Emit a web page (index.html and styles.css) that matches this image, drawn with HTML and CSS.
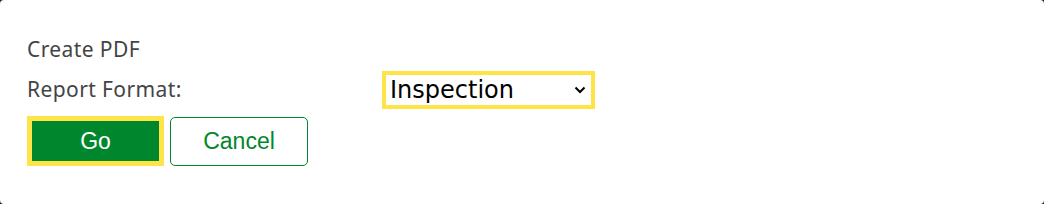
FILE: index.html
```html
<!DOCTYPE html>
<html lang="en">
<head>
    <meta charset="UTF-8">
    <title>Create PDF</title>
    <link rel="stylesheet" href="styles.css">
</head>
<body>
    <div class="dialog">
        <div class="title">Create PDF</div>
        <div class="form-row">
            <label class="label">Report Format:</label>
            <div class="select-box">
                <span class="select-value">Inspection</span>
                <svg class="chevron" width="12" height="8" viewBox="0 0 12 8">
                    <path d="M1.5 1.5 L6 6 L10.5 1.5" fill="none" stroke="#000" stroke-width="2"/>
                </svg>
            </div>
        </div>
        <div class="buttons">
            <button class="btn btn-go">Go</button>
            <button class="btn btn-cancel">Cancel</button>
        </div>
    </div>
</body>
</html>
```

FILE: styles.css
```css
* {
    margin: 0;
    padding: 0;
    box-sizing: border-box;
}

body {
    background: #222;
    font-family: 'Noto Sans', 'Open Sans', sans-serif;
    width: 1044px;
    height: 204px;
    overflow: hidden;
}

.dialog {
    width: 1044px;
    height: 204px;
    background: #fff;
    border-radius: 4px;
    padding: 35px 27px 0 27px;
}

.title {
    font-size: 21px;
    line-height: 28px;
    letter-spacing: 0.4px;
    color: #444;
}

.form-row {
    display: flex;
    align-items: flex-start;
    margin-top: 8px;
}

.label {
    width: 355px;
    padding-top: 4px;
    font-size: 21px;
    line-height: 28px;
    letter-spacing: 0.4px;
    color: #444;
}

.select-box {
    width: 213px;
    height: 38px;
    border: 4px solid #ffe447;
    display: flex;
    align-items: center;
    justify-content: space-between;
    padding: 0 5px 0 4px;
    font-family: 'DejaVu Sans', sans-serif;
    font-size: 24px;
    color: #000;
}

.buttons {
    display: flex;
    align-items: flex-start;
    gap: 6px;
    margin-top: 7px;
}

.btn {
    width: 137px;
    height: 50px;
    font-family: 'Liberation Sans', Arial, sans-serif;
    font-size: 23px;
    cursor: pointer;
}

.btn-go {
    background: #00872d;
    color: #fff;
    border: 5px solid #ffe447;
}

.btn-cancel {
    background: #fff;
    color: #00872d;
    border: 1px solid #00872d;
    border-radius: 5px;
    margin-top: 1px;
    height: 49px;
    width: 138px;
}
```
